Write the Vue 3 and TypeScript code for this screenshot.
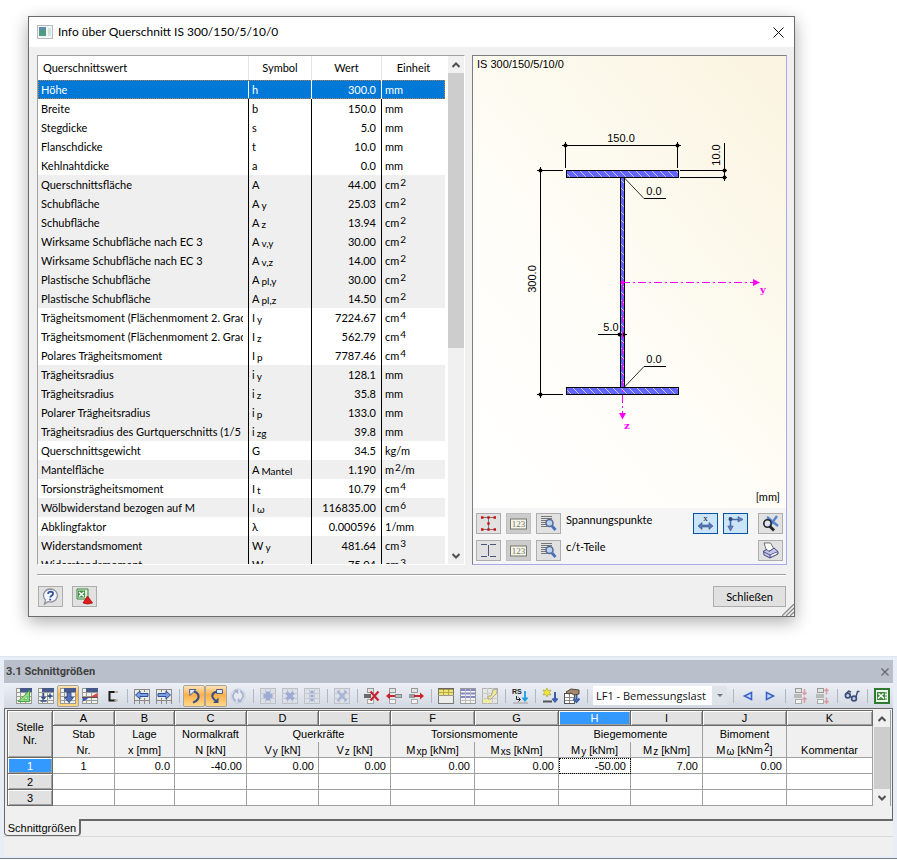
<script setup lang="ts">
import { ref } from 'vue'

interface SectionRow {
  name: string
  sym: string
  sub?: string
  value: string
  unit: string
  sup?: string
  rest?: string
  shade?: boolean
}

interface Tool {
  icon: string
  label: string
  active?: boolean
  disabled?: boolean
}

interface GridRow {
  nr: number
  cells: string[]
}

const rows: SectionRow[] = [
  { name: 'Höhe', sym: 'h', value: '300.0', unit: 'mm' },
  { name: 'Breite', sym: 'b', value: '150.0', unit: 'mm' },
  { name: 'Stegdicke', sym: 's', value: '5.0', unit: 'mm' },
  { name: 'Flanschdicke', sym: 't', value: '10.0', unit: 'mm' },
  { name: 'Kehlnahtdicke', sym: 'a', value: '0.0', unit: 'mm' },
  { name: 'Querschnittsfläche', sym: 'A', value: '44.00', unit: 'cm', sup: '2', shade: true },
  { name: 'Schubfläche', sym: 'A', sub: 'y', value: '25.03', unit: 'cm', sup: '2', shade: true },
  { name: 'Schubfläche', sym: 'A', sub: 'z', value: '13.94', unit: 'cm', sup: '2', shade: true },
  { name: 'Wirksame Schubfläche nach EC 3', sym: 'A', sub: 'v,y', value: '30.00', unit: 'cm', sup: '2', shade: true },
  { name: 'Wirksame Schubfläche nach EC 3', sym: 'A', sub: 'v,z', value: '14.00', unit: 'cm', sup: '2', shade: true },
  { name: 'Plastische Schubfläche', sym: 'A', sub: 'pl,y', value: '30.00', unit: 'cm', sup: '2', shade: true },
  { name: 'Plastische Schubfläche', sym: 'A', sub: 'pl,z', value: '14.50', unit: 'cm', sup: '2', shade: true },
  { name: 'Trägheitsmoment (Flächenmoment 2. Grad', sym: 'I', sub: 'y', value: '7224.67', unit: 'cm', sup: '4' },
  { name: 'Trägheitsmoment (Flächenmoment 2. Grad', sym: 'I', sub: 'z', value: '562.79', unit: 'cm', sup: '4' },
  { name: 'Polares Trägheitsmoment', sym: 'I', sub: 'p', value: '7787.46', unit: 'cm', sup: '4' },
  { name: 'Trägheitsradius', sym: 'i', sub: 'y', value: '128.1', unit: 'mm', shade: true },
  { name: 'Trägheitsradius', sym: 'i', sub: 'z', value: '35.8', unit: 'mm', shade: true },
  { name: 'Polarer Trägheitsradius', sym: 'i', sub: 'p', value: '133.0', unit: 'mm', shade: true },
  { name: 'Trägheitsradius des Gurtquerschnitts (1/5', sym: 'i', sub: 'zg', value: '39.8', unit: 'mm', shade: true },
  { name: 'Querschnittsgewicht', sym: 'G', value: '34.5', unit: 'kg/m' },
  { name: 'Mantelfläche', sym: 'A', sub: 'Mantel', value: '1.190', unit: 'm', sup: '2', rest: '/m', shade: true },
  { name: 'Torsionsträgheitsmoment', sym: 'I', sub: 't', value: '10.79', unit: 'cm', sup: '4' },
  { name: 'Wölbwiderstand bezogen auf M', sym: 'I', sub: 'ω', value: '116835.00', unit: 'cm', sup: '6', shade: true },
  { name: 'Abklingfaktor', sym: 'λ', value: '0.000596', unit: '1/mm' },
  { name: 'Widerstandsmoment', sym: 'W', sub: 'y', value: '481.64', unit: 'cm', sup: '3', shade: true },
  { name: 'Widerstandsmoment', sym: 'W', sub: 'z', value: '75.04', unit: 'cm', sup: '3', shade: true },
]

const selected = ref(0)
const loadCase = ref('LF1')

const letters = ['A', 'B', 'C', 'D', 'E', 'F', 'G', 'H', 'I', 'J', 'K']

const gridRows: GridRow[] = [
  { nr: 1, cells: ['1', '0.0', '-40.00', '0.00', '0.00', '0.00', '0.00', '-50.00', '7.00', '0.00', ''] },
  { nr: 2, cells: Array(11).fill('') },
  { nr: 3, cells: Array(11).fill('') },
]

/* Spreadsheet base shared by many toolbar icons */
const sheet = (head: string, line = '#9a9a94') =>
  `<rect x=".5" y=".5" width="15" height="15" fill="#f2f2ec" stroke="${line}"/>` +
  `<path d="M0 4.5H16M0 8.5H16M0 12.5H16M4.5 0V16M9.5 0V16" stroke="${line}" fill="none"/>` +
  `<rect x="4" y="0" width="12" height="4" fill="${head}"/>`

/* Document page with the ruled lower edge used by the navigation icons */
const ledger =
  '<rect x=".5" y="1.5" width="15" height="11" fill="#e9e9e6" stroke="#8a8a88"/>' +
  '<path d="M5.5 1V4M10.5 1V4M5.5 10V16M10.5 10V16M.5 12V16M15.5 12V16" stroke="#8a8a88"/>'

const faded =
  '<rect x=".5" y=".5" width="15" height="15" fill="#dcdfe6" stroke="#bdc0c8"/>' +
  '<path d="M0 5.5H16M0 10.5H16M5.5 0V16M10.5 0V16" stroke="#c6c9d1" fill="none"/>'

const miniRows =
  '<rect x="3.5" y=".5" width="6" height="4" fill="#e4e4e4" stroke="#999"/>' +
  '<rect x="3.5" y="11.5" width="6" height="4" fill="#f2f2f2" stroke="#aaa"/>'

const icons: Record<string, string> = {
  chart: sheet('#46598c') + '<path d="M2 13.5L13.5 2.5V13.5Z" fill="#8fdc85" stroke="#4aa645"/><path d="M8 11.5H11.5V8Z" fill="#e8fbe4" stroke="#4aa645" stroke-width=".6"/>',
  addRow: sheet('#46598c') + '<path d="M5.5 5V11M3.500 9L5.500 11L7.500 9M2.500 13H8.500M12 5.500V10.500M9.500 8H14.500" stroke="#2f4d92" stroke-width="1.500" fill="none"/>',
  fillDown: sheet('#46598c') + '<path d="M7 4.500H11V9.500H13.500L9 14.500L4.500 9.500H7Z" fill="#5373bd" stroke="#26407f" stroke-width=".8"/>',
  diagram: sheet('#46598c') + '<path d="M1 9V13.500L8 9Z" fill="#3a4fd0"/><path d="M15.500 5V9H8Z" fill="#e04343"/><path d="M0 9.500H16" stroke="#555"/>',
  bracket: '<path d="M12 4H5.500V12.500H12" stroke="#1d1d1d" stroke-width="2" fill="none"/><path d="M10.500 4H14M10.500 12.500H14" stroke="#bdb49a" stroke-width="2"/>',
  prev: ledger + '<path d="M1.500 7L6 3V5.500H14V8.500H6V11Z" fill="#7c9ee2" stroke="#2c4f9e"/>',
  next: ledger + '<path d="M14.500 7L10 3V5.500H2V8.500H10V11Z" fill="#7c9ee2" stroke="#2c4f9e"/>',
  undo: '<path d="M3.500 1.500H10L4 7.500Z" fill="#dfe8ff" stroke="#4d5f8c"/><path d="M8 3.500Q13 5 12.500 9.500Q11.500 13 7 14.500" stroke="#3d5180" stroke-width="2.200" fill="none"/>',
  redo: '<path d="M8.500 1.500H14.500V5.500H8.500Z" fill="#dfe8ff" stroke="#4d5f8c"/><path d="M9 3.500Q3.500 5 4.500 9Q5.500 12 9 13.500" stroke="#3d5180" stroke-width="2.200" fill="none"/><path d="M10.500 9.500V15H5Z" fill="#3d5180"/>',
  refresh: '<circle cx="8" cy="8" r="7" fill="#e6e9f1" stroke="#c6ccd9"/><path d="M6 13Q2.500 11 3 7Q4 4 7 3M10 3Q13.500 5 13 9Q12 12 9 13M4.500 2.500H7.500V5.500M11.500 13.500H8.500V10.500" stroke="#a5b1cd" stroke-width="1.700" fill="none"/>',
  plusDim: faded + '<path d="M8 3.500V12.500M3.500 8H12.500" stroke="#9cacd6" stroke-width="4"/>',
  starDim: faded + '<path d="M4.500 4.500L11.500 11.500M11.500 4.500L4.500 11.500" stroke="#9cacd6" stroke-width="3.500"/>',
  dotsDim: faded + '<path d="M6.500 4H9.500M6.500 8H9.500M6.500 12H9.500" stroke="#9cacd6" stroke-width="2.500"/>',
  crossDim: faded + '<path d="M3.500 3L12.500 13M12.500 3L3.500 13" stroke="#a4b3d8" stroke-width="2.200"/>',
  delRow: miniRows + '<rect x="0" y="6" width="7" height="4" fill="#6a6a6a"/><path d="M6.500 3.500L14.500 12.500M14.500 3.500L6.500 12.500" stroke="#c9262e" stroke-width="2.200"/>',
  rowLeft: miniRows + '<rect x="9.500" y="6.500" width="6" height="3" fill="#bbb" stroke="#888"/><path d="M0 8L4 4.500V7H9V9H4V11.500Z" fill="#c9262e"/>',
  rowRight: miniRows + '<rect x="1" y="6" width="6" height="4" fill="#999"/><path d="M16 8L12 4.500V7H6V9H12V11.500Z" fill="#c9262e"/>',
  headYellow: '<rect x=".5" y=".5" width="15" height="15" fill="#ecedea" stroke="#777"/><rect x="1" y="1" width="14" height="6" fill="#efe372"/><path d="M1 4.500H15M5.500 1V7M10.500 1V7" stroke="#b5a94c"/><path d="M0 1H16" stroke="#5a5a3c"/><path d="M0 7.500H16" stroke="#999"/>',
  rowsBlue: '<rect x=".5" y=".5" width="15" height="15" fill="#f4f4f4" stroke="#999"/><path d="M1 2H15M1 5.500H15M1 9H15" stroke="#8389c6" stroke-width="2"/><path d="M1 12.500H15M5.500 1V15M10.500 1V15" stroke="#bbb"/>',
  editNote: '<rect x=".5" y=".5" width="15" height="15" fill="#e6e6e2" stroke="#b5b5b5"/><path d="M0 5.500H16M0 10.500H16M5.500 0V16M10.500 0V16" stroke="#cacaca"/><path d="M1 11H9V15H1Z" fill="#f1eda0"/><path d="M11 2L15 1V5L9 11H6V8H9Z" fill="#efe88f" stroke="#999" stroke-width=".8"/>',
  rs: '<text x="0" y="6" font-size="7" font-weight="bold" font-family="Liberation Sans, sans-serif" fill="#222">RS</text><path d="M4.500 8V11.500H8M6.500 9.500L8.500 11.500L6.500 13.500" stroke="#222" fill="none"/><path d="M1 15H16" stroke="#999"/><path d="M13 3V12M10.500 9.500L13 12.500L15.500 9.500" stroke="#1ba0e0" stroke-width="1.800" fill="none"/>',
  newLoad: '<path d="M5 0L6 2.500L9 2L7.500 4.500L9 7L6 6.500L5 9L4 6.500L1 7L2.500 4.500L1 2L4 2.500Z" fill="#f2e83c" stroke="#b0a82c" stroke-width=".7"/><path d="M1 13.500H10" stroke="#555" stroke-width="2"/><path d="M13 4V12.500M10.500 10.500L13 13.500L15.500 10.500" stroke="#3b61a8" stroke-width="2" fill="none"/>',
  importHand: '<rect x=".5" y="5.500" width="10" height="10" fill="#fff" stroke="#555"/><path d="M1 9.500H10M1 12.500H10M5.500 6V15" stroke="#888"/><path d="M2 4L7 1L15 2V6L10 7L7 5L4 6Z" fill="#a58a72" stroke="#54453a"/><path d="M12.500 7V12M9.500 10.500L12.500 14L15.500 10.500" stroke="#3b61a8" stroke-width="2" fill="none"/>',
  left: '<path d="M11.500 4.500V11.500L4.500 8Z" fill="#cfdcff" stroke="#3a62cc" stroke-width="1.600"/>',
  right: '<path d="M4.500 4.500V11.500L11.500 8Z" fill="#cfdcff" stroke="#3a62cc" stroke-width="1.600"/>',
  moveUp: miniRows + '<rect x="2" y="6" width="8" height="4" fill="#b9b9b9"/><path d="M12.500 1V6.500M10.500 4.500L12.500 6.500L14.500 4.500M12.500 15V9.500M10.500 11.500L12.500 9.500L14.500 11.500" stroke="#dc9a9e" stroke-width="1.500" fill="none"/>',
  moveDown: miniRows + '<rect x="2" y="6" width="8" height="4" fill="#b9b9b9"/><path d="M12.500 6.500V1M10.500 3L12.500 1L14.500 3M12.500 9.500V15M10.500 13L12.500 15L14.500 13" stroke="#dc9a9e" stroke-width="1.500" fill="none"/>',
  glasses: '<circle cx="3.800" cy="7.500" r="2.400" fill="#c7d4ef" stroke="#3d4f78" stroke-width="1.700"/><circle cx="10" cy="10.500" r="2.400" fill="#c7d4ef" stroke="#3d4f78" stroke-width="1.700"/><path d="M6 8.500L7.800 9.500M2 6L4.500 3L7 4M12 9L13.500 3.500H15.500" stroke="#3d4f78" stroke-width="1.400" fill="none"/>',
  excel: '<rect x="1" y="1" width="14" height="14" fill="#eef5ea" stroke="#2f7a32" stroke-width="2"/><path d="M11 5H13M11 8H13M11 11H13" stroke="#3c8a3e"/><rect x="3" y="4" width="8" height="8" fill="#3c8a3e"/><path d="M4.500 5.500L10 10.500M9.500 5.500L4 10.500" stroke="#fff" stroke-width="1.500"/>',
}

const tools: Tool[][] = [
  [
    { icon: 'chart', label: 'Diagramm' },
    { icon: 'addRow', label: 'Zeile hinzufügen' },
    { icon: 'fillDown', label: 'Nach unten füllen', active: true },
    { icon: 'diagram', label: 'Verlauf' },
    { icon: 'bracket', label: 'Querschnitt' },
  ],
  [
    { icon: 'prev', label: 'Vorherige Tabelle' },
    { icon: 'next', label: 'Nächste Tabelle' },
  ],
  [
    { icon: 'undo', label: 'Auswahl übernehmen', active: true },
    { icon: 'redo', label: 'Auswahl zurück', active: true },
    { icon: 'refresh', label: 'Aktualisieren', disabled: true },
  ],
  [
    { icon: 'plusDim', label: 'Einfügen', disabled: true },
    { icon: 'starDim', label: 'Multiplizieren', disabled: true },
    { icon: 'dotsDim', label: 'Teilen', disabled: true },
  ],
  [{ icon: 'crossDim', label: 'Leeren', disabled: true }],
  [
    { icon: 'delRow', label: 'Zeile löschen' },
    { icon: 'rowLeft', label: 'Zeile einfügen' },
    { icon: 'rowRight', label: 'Zeile entfernen' },
  ],
  [
    { icon: 'headYellow', label: 'Kopfzeile' },
    { icon: 'rowsBlue', label: 'Zeilen' },
    { icon: 'editNote', label: 'Bearbeiten' },
  ],
  [{ icon: 'rs', label: 'RS Import' }],
  [
    { icon: 'newLoad', label: 'Neuer Lastfall' },
    { icon: 'importHand', label: 'Übernehmen' },
  ],
]

const toolsAfter: Tool[][] = [
  [
    { icon: 'left', label: 'Vorheriger Lastfall' },
    { icon: 'right', label: 'Nächster Lastfall' },
  ],
  [
    { icon: 'moveUp', label: 'Zusammenführen', disabled: true },
    { icon: 'moveDown', label: 'Trennen', disabled: true },
  ],
  [{ icon: 'glasses', label: 'Ansicht' }],
  [{ icon: 'excel', label: 'Excel' }],
]

const dots: [number, number][] = [
  [92, 89], [204, 89], [67, 114], [67, 338], [251, 114], [251, 121], [146, 278], [150, 278],
]
</script>

<template>
  <main class="page">
    <section class="dialog" aria-labelledby="dlg-title">
      <header class="dialog-head">
        <svg class="app-icon" viewBox="0 0 16 14" width="16" height="14" aria-hidden="true">
          <rect x=".5" y=".5" width="15" height="13" fill="#f3f5f7" stroke="#b4bac0" />
          <rect x="2" y="2" width="7" height="9" fill="#5f8fb0" />
          <path d="M2 11V6L9 4V11Z" fill="#4f9a80" />
          <rect x="11" y="3" width="3" height="8" fill="#d4e4dc" />
        </svg>
        <h1 id="dlg-title">Info über Querschnitt IS 300/150/5/10/0</h1>
        <button class="close" type="button" aria-label="Dialog schließen">
          <svg viewBox="0 0 11 11" width="11" height="11"><path d="M.5 .5L10.500 10.500M10.500 .5L.5 10.500" stroke="#111" fill="none" /></svg>
        </button>
      </header>

      <div class="dialog-body">
        <div class="values">
          <div class="values-view">
            <table class="values-table">
              <colgroup>
                <col class="c-name" /><col class="c-sym" /><col class="c-val" /><col class="c-unit" />
              </colgroup>
              <thead>
                <tr>
                  <th scope="col" class="first">Querschnittswert</th>
                  <th scope="col">Symbol</th>
                  <th scope="col">Wert</th>
                  <th scope="col">Einheit</th>
                </tr>
              </thead>
              <tbody>
                <tr
                  v-for="(r, i) in rows"
                  :key="i"
                  :class="{ shade: r.shade, selected: i === selected }"
                  @click="selected = i"
                >
                  <td><div class="clip">{{ r.name }}</div></td>
                  <td>{{ r.sym }}<sub v-if="r.sub">{{ r.sub }}</sub></td>
                  <td class="num">{{ r.value }}</td>
                  <td>{{ r.unit }}<sup v-if="r.sup">{{ r.sup }}</sup>{{ r.rest }}</td>
                </tr>
              </tbody>
            </table>
          </div>
          <div class="scroll">
            <button type="button" aria-label="Nach oben">
              <svg viewBox="0 0 8 6" width="8" height="6"><path d="M.5 5L4 1.500L7.500 5" /></svg>
            </button>
            <div class="track"><div class="thumb"></div></div>
            <button type="button" aria-label="Nach unten">
              <svg viewBox="0 0 8 6" width="8" height="6"><path d="M.5 1L4 4.500L7.500 1" /></svg>
            </button>
          </div>
        </div>

        <div class="preview">
          <div class="canvas">
            <svg class="drawing" viewBox="0 0 313 452" role="img" aria-label="Querschnitt IS 300/150/5/10/0">
              <defs>
                <pattern id="hatch" width="8" height="8" patternUnits="userSpaceOnUse">
                  <rect width="8" height="8" fill="#6464ff" />
                  <path d="M-1 -1L9 9M-1 7L1 9M7 -1L9 1" stroke="#c4c4ff" />
                </pattern>
              </defs>
              <text x="4" y="12">IS 300/150/5/10/0</text>
              <text x="307" y="445" text-anchor="end" class="tahoma">[mm]</text>

              <g class="steel">
                <rect x="147.500" y="121.500" width="4" height="210" />
                <rect x="93.500" y="114.500" width="112" height="7" />
                <rect x="93.500" y="331.500" width="112" height="7" />
              </g>

              <g class="dim">
                <path d="M89 89.500H208M92.500 86V112M204.500 86V112" />
                <path d="M67.500 111V342M64 114.500H90M64 338.500H90" />
                <path d="M207 114.500H254M207 121.500H254M251.500 87V125" />
                <path d="M171 142.500H193M171 310.500H193M125 278.500H154" />
              </g>
              <path d="M151.500 122L171 142.500M151.500 331L171 310.500" stroke="#333" fill="none" />
              <circle v-for="(d, i) in dots" :key="i" :cx="d[0] + 0.5" :cy="d[1] + 0.5" r="2" />

              <text x="148" y="86" text-anchor="middle">150.0</text>
              <text x="181" y="139" text-anchor="middle">0.0</text>
              <text x="181" y="307" text-anchor="middle">0.0</text>
              <text x="138" y="275" text-anchor="middle">5.0</text>
              <text transform="translate(63 223) rotate(-90)" text-anchor="middle">300.0</text>
              <text transform="translate(247 99) rotate(-90)" text-anchor="middle">10.0</text>

              <g class="axis">
                <path d="M149 226.500H281" />
                <path d="M149.500 227V357" />
              </g>
              <g fill="#ff00ff">
                <circle cx="149.500" cy="226.500" r="2" />
                <path d="M280 223V230L287 226.500Z" />
                <path d="M146 357H153L149.500 363.500Z" />
                <text class="axis-name" x="287" y="237">y</text>
                <text class="axis-name" x="151" y="373">z</text>
              </g>
            </svg>
          </div>

          <div class="options">
            <button type="button" class="tile" aria-label="Spannungspunkte anzeigen">
              <svg viewBox="0 0 17 17" width="17" height="17">
                <path d="M2 2.500H15M2 14.500H15M8.500 3V14" stroke="#777" fill="none" />
                <path d="M1 2.500H3.500M7.300 2.500H9.700M13.500 2.500H16M1 14.500H3.500M7.300 14.500H9.700M13.500 14.500H16M7.300 8.500H9.700" stroke="#d01010" stroke-width="2.400" />
              </svg>
            </button>
            <button type="button" class="tile off" aria-label="Nummerierung Spannungspunkte" disabled>
              <svg viewBox="0 0 17 12" width="17" height="12">
                <rect x=".5" y="1" width="16" height="10" fill="#f4f4e8" stroke="#77776c" />
                <text class="tiny" x="8.500" y="9" text-anchor="middle">123</text>
              </svg>
            </button>
            <button type="button" class="tile" aria-label="Spannungspunkte Details">
              <svg viewBox="0 0 17 17" width="17" height="17">
                <path d="M1 1.500H12M1 3.500H12M1 5.500H9M1 7.500H6M1 9.500H6M1 11.500H7" stroke="#777" />
                <circle cx="9.500" cy="8" r="3.500" fill="#bcd2f4" stroke="#54698f" stroke-width="1.500" />
                <path d="M12 11L15.500 15" stroke="#4c6fbd" stroke-width="2.800" />
              </svg>
            </button>
            <span class="opt-label">Spannungspunkte</span>
            <button type="button" class="tile on" aria-label="Bemaßung">
              <svg viewBox="0 0 17 17" width="17" height="17">
                <text class="tiny x" x="8.500" y="6" text-anchor="middle">x</text>
                <path d="M1 11L5 7.500V10H12V7.500L16 11L12 14.500V12H5V14.500Z" fill="#5577b5" stroke="#3a5487" stroke-width=".6" />
              </svg>
            </button>
            <button type="button" class="tile on" aria-label="Achsen">
              <svg viewBox="0 0 17 17" width="17" height="17">
                <path d="M3.500 12V4.500H12" stroke="#4b6ba5" stroke-width="1.600" fill="none" />
                <circle cx="3.500" cy="4" r="2" fill="#2e4679" />
                <path d="M11 1.500L16 4.500L11 7ZM.8 11H6.200L3.500 16Z" fill="#5f80bd" stroke="#3a5487" stroke-width=".6" />
              </svg>
            </button>
            <button type="button" class="tile end" aria-label="Zoom zurücksetzen">
              <svg viewBox="0 0 17 17" width="17" height="17">
                <path d="M5 2L16 11M15 1L7 12" stroke="#5a83cf" stroke-width="2.400" />
                <circle cx="5.500" cy="8.500" r="3.700" fill="#dde6f4" fill-opacity=".6" stroke="#222" stroke-width="1.600" />
                <path d="M8 11.500L12 15.500" stroke="#222" stroke-width="2.800" />
              </svg>
            </button>

            <button type="button" class="tile" aria-label="c/t-Teile anzeigen">
              <svg viewBox="0 0 17 17" width="17" height="17">
                <path d="M1 2.500H7M10 2.500H16M1 14.500H7M10 14.500H16M8.500 3V14" stroke="#4a5478" fill="none" />
              </svg>
            </button>
            <button type="button" class="tile off" aria-label="Nummerierung c/t-Teile" disabled>
              <svg viewBox="0 0 17 12" width="17" height="12">
                <rect x=".5" y="1" width="16" height="10" fill="#f4f4e8" stroke="#77776c" />
                <text class="tiny" x="8.500" y="9" text-anchor="middle">123</text>
              </svg>
            </button>
            <button type="button" class="tile" aria-label="c/t-Teile Details">
              <svg viewBox="0 0 17 17" width="17" height="17">
                <path d="M1 1.500H12M1 3.500H12M1 5.500H9M1 7.500H6M1 9.500H6M1 11.500H7" stroke="#777" />
                <circle cx="9.500" cy="8" r="3.500" fill="#bcd2f4" stroke="#54698f" stroke-width="1.500" />
                <path d="M12 11L15.500 15" stroke="#4c6fbd" stroke-width="2.800" />
              </svg>
            </button>
            <span class="opt-label">c/t-Teile</span>
            <button type="button" class="tile end" aria-label="Drucken">
              <svg viewBox="0 0 17 17" width="17" height="17">
                <path d="M2 1H8.500L12 7L5 10Z" fill="#fff" stroke="#555" stroke-width=".8" />
                <path d="M1.500 9L5 7.500L7 9.500L12 6L16 9.500V12L8 16L2 13Z" fill="#c3c3ea" stroke="#3d3d74" stroke-width=".9" />
                <path d="M2 10L8 13L16 9.500M8 13V16" stroke="#3d3d74" stroke-width=".8" fill="none" />
                <path d="M9.500 13.500L14.500 11.200" stroke="#fff" stroke-width="1.200" />
              </svg>
            </button>
          </div>
        </div>
      </div>

      <footer class="dialog-foot">
        <button type="button" class="tile" aria-label="Hilfe">
          <svg viewBox="0 0 17 17" width="17" height="17">
            <path d="M8.500 1A7 6.500 0 1 1 6 13.600L2.500 16L3.500 12A7 6.500 0 0 1 8.500 1Z" fill="#f4f6fb" stroke="#8e929b" stroke-width="1.300" />
            <path d="M6 5.800Q6.300 3.600 8.700 3.600Q11.200 3.800 11 5.800Q10.800 7.300 9.200 8Q8.400 8.600 8.400 9.600M8.200 10.800V12.500" stroke="#31549e" stroke-width="1.900" fill="none" />
          </svg>
        </button>
        <button type="button" class="tile" aria-label="Excel-Export">
          <svg viewBox="0 0 17 17" width="17" height="17">
            <path d="M1 1H12V11H1Z" fill="#dcebd4" stroke="#3b8440" />
            <rect x="2" y="2.500" width="7" height="7" fill="#3f8f46" />
            <path d="M3 4L8 8.500M8 4L3 8.500" stroke="#fff" stroke-width="1.400" />
            <path d="M11.500 8L16.500 15L11.500 16L7 15Z" fill="#e01c1c" stroke="#9c0f0f" stroke-width=".8" />
          </svg>
        </button>
        <button type="button" class="push">Schließen</button>
        <svg class="grip" viewBox="0 0 12 12" width="12" height="12" aria-hidden="true">
          <path d="M0 12L12 0M4 12L12 4M8 12L12 8" stroke="#8a8a8a" stroke-width="1.300" />
        </svg>
      </footer>
    </section>

    <section class="panel" aria-labelledby="panel-title">
      <header class="panel-head">
        <h2 id="panel-title">3.1 Schnittgrößen</h2>
        <button class="close" type="button" aria-label="Fenster schließen">
          <svg viewBox="0 0 8 8" width="8" height="8"><path d="M.5 .5L7.500 7.500M7.500 .5L.5 7.500" stroke="#666" stroke-width="1.200" fill="none" /></svg>
        </button>
      </header>

      <div class="toolbar" role="toolbar">
        <template v-for="(g, gi) in tools" :key="gi">
          <button
            v-for="t in g"
            :key="t.icon"
            type="button"
            class="tool"
            :class="{ active: t.active }"
            :disabled="t.disabled"
            :aria-label="t.label"
          >
            <svg viewBox="0 0 16 16" width="16" height="16" v-html="icons[t.icon]"></svg>
          </button>
          <span class="sep"></span>
        </template>
        <label class="combo">
          <select v-model="loadCase" aria-label="Lastfall">
            <option value="LF1">LF1 - Bemessungslast</option>
          </select>
          <span class="arrow"></span>
        </label>
        <template v-for="(g, gi) in toolsAfter" :key="gi">
          <span class="sep"></span>
          <button
            v-for="t in g"
            :key="t.icon"
            type="button"
            class="tool"
            :disabled="t.disabled"
            :aria-label="t.label"
          >
            <svg viewBox="0 0 16 16" width="16" height="16" v-html="icons[t.icon]"></svg>
          </button>
        </template>
      </div>

      <div class="client">
        <table class="sheet">
          <colgroup>
            <col class="w46" /><col class="w62" /><col class="w60" /><col class="w72" /><col class="w72" /><col class="w72" />
            <col class="w84" /><col class="w84" /><col class="w72" /><col class="w72" /><col class="w84" /><col />
          </colgroup>
          <thead>
            <tr class="letters">
              <th rowspan="3" scope="col" class="corner">Stelle<br />Nr.</th>
              <th v-for="l in letters" :key="l" scope="col" :class="{ hot: l === 'H' }">{{ l }}</th>
            </tr>
            <tr class="groups">
              <th>Stab</th>
              <th>Lage</th>
              <th>Normalkraft</th>
              <th colspan="2">Querkräfte</th>
              <th colspan="2">Torsionsmomente</th>
              <th colspan="2">Biegemomente</th>
              <th>Bimoment</th>
              <th></th>
            </tr>
            <tr class="units">
              <th>Nr.</th>
              <th>x [mm]</th>
              <th>N [kN]</th>
              <th>V<sub>y</sub> [kN]</th>
              <th>V<sub>z</sub> [kN]</th>
              <th>M<sub>xp</sub> [kNm]</th>
              <th>M<sub>xs</sub> [kNm]</th>
              <th>M<sub>y</sub> [kNm]</th>
              <th>M<sub>z</sub> [kNm]</th>
              <th>M<sub>ω</sub> [kNm<sup>2</sup>]</th>
              <th>Kommentar</th>
            </tr>
          </thead>
          <tbody>
            <tr v-for="r in gridRows" :key="r.nr">
              <th scope="row" :class="{ hot: r.nr === 1 }">{{ r.nr }}</th>
              <td v-for="(c, ci) in r.cells" :key="ci" :class="{ mid: ci === 0, focus: r.nr === 1 && ci === 7 }">{{ c }}</td>
            </tr>
          </tbody>
        </table>
        <div class="scroll">
          <button type="button" aria-label="Nach oben">
            <svg viewBox="0 0 8 6" width="8" height="6"><path d="M.5 5L4 1.500L7.500 5" /></svg>
          </button>
          <div class="track"><div class="thumb"></div></div>
          <button type="button" aria-label="Nach unten">
            <svg viewBox="0 0 8 6" width="8" height="6"><path d="M.5 1L4 4.500L7.500 1" /></svg>
          </button>
        </div>
      </div>

      <div class="tabs">
        <button type="button" class="tab">Schnittgrößen</button>
        <span class="rail"></span>
      </div>
      <div class="status"></div>
    </section>
  </main>
</template>

<style>
body {
  margin: 0;
  background: #fff;
}
</style>

<style scoped>
.page {
  font-family: Lato, "Open Sans", sans-serif;
  font-size: 11px;
  line-height: 16px;
  color: #000;
}

button {
  font: inherit;
  color: inherit;
  padding: 0;
  border: 0;
  background: none;
}

h1,
h2 {
  margin: 0;
  flex: 1;
}

sub,
sup {
  font-size: 10px;
  line-height: 0;
  margin-left: 1px;
  vertical-align: baseline;
  position: relative;
}

sub {
  top: 1px;
}

sup {
  top: -3px;
}

/* Dialog */
.dialog {
  margin: 16px 102px 0 28px;
  border: 1px solid #6b6b6b;
  background: #f0f0f0;
  box-shadow: 0 5px 16px rgba(0, 0, 0, 0.32);
}

.dialog-head {
  display: flex;
  align-items: center;
  height: 30px;
  padding: 0 10px 0 8px;
  gap: 5px;
  background: #fff;
}

.dialog-head h1 {
  font: 12px/16px Lato, "Open Sans", sans-serif;
}

.close {
  display: flex;
}

.dialog-body {
  display: grid;
  grid-template-columns: minmax(0, 428fr) minmax(0, 315fr);
  gap: 7px;
  padding: 8px 7px 9px 8px;
}

.values {
  display: flex;
  height: 508px;
  background: #fff;
  border: 1px solid #fff;
  border-top-color: #a0a0a0;
  border-left-color: #a0a0a0;
}

.values-view {
  flex: 1;
  min-width: 0;
  overflow: hidden;
  padding-right: 3px;
}

.values-table,
.sheet {
  width: 100%;
  table-layout: fixed;
  border-collapse: separate;
  border-spacing: 0;
}

.values-table sub {
  margin-left: 2px;
}

.c-name {
  width: 211px;
}

.c-sym,
.c-unit {
  width: 63px;
}

.c-val {
  width: 70px;
}

.values-table th {
  height: 24px;
  padding: 0;
  font-weight: normal;
  border-right: 1px solid #e5e5e5;
  box-sizing: border-box;
}

.values-table th.first {
  text-align: left;
  padding-left: 5px;
}

.values-table td {
  height: 19px;
  box-sizing: border-box;
  padding: 1px 5px 0 3px;
  border-right: 1px solid #000;
  white-space: nowrap;
}

.values-table th:last-child,
.values-table td:last-child {
  border-right: 0;
}

.values-table .num {
  text-align: right;
}

.clip {
  overflow: hidden;
}

.shade td {
  background: #efefef;
}

.selected td {
  background: #0078d7;
  color: #fff;
  border-right-color: #fff;
}

.selected {
  outline: 1px dotted #b08050;
  outline-offset: -1px;
}

.scroll {
  display: flex;
  flex-direction: column;
  width: 16px;
  background: #f0f0f0;
}

.scroll button {
  display: grid;
  place-items: center;
  height: 17px;
}

.scroll path {
  fill: none;
  stroke: #505050;
  stroke-width: 2;
}

.track {
  flex: 1;
}

.thumb {
  height: 58%;
  background: #cdcdcd;
}

.preview {
  display: flex;
  flex-direction: column;
  border: 1px solid #a9a9ec;
  border-top-color: #7f7f7f;
  border-left-color: #7f7f7f;
  background: #f5f5f5;
}

.canvas {
  flex: 1;
  background: linear-gradient(50deg, #fff 0%, #fffdf8 40%, #fcf8ea 72%, #faf3e0 100%);
}

.drawing {
  display: block;
  width: 100%;
}

.drawing text {
  font: 11px "Liberation Sans", Arial, sans-serif;
}

.drawing .tahoma {
  font-family: Lato, "Open Sans", sans-serif;
}

.drawing .axis-name {
  font: bold 10px "DejaVu Serif", serif;
}

.steel rect {
  fill: url(#hatch);
  stroke: #000;
}

.dim path {
  fill: none;
  stroke: #000;
  shape-rendering: crispEdges;
}

.axis path {
  fill: none;
  stroke: #f0f;
  stroke-dasharray: 8 3 2 3;
  shape-rendering: crispEdges;
}

.options {
  display: grid;
  grid-template-columns: 25px 25px 25px 1fr 25px 25px 30px;
  gap: 6px 5px;
  padding: 5px 3px 3px;
}

.tile {
  display: grid;
  place-items: center;
  box-sizing: border-box;
  width: 25px;
  height: 21px;
  background: #e1e1e1;
  border: 1px solid #adadad;
}

.tile.off {
  background: #ccc;
  border-color: #bfbfbf;
}

.tile.on {
  background: #cce4f7;
  border-color: #0054a0;
}

.tile.end {
  grid-column: 7;
  justify-self: end;
}

.tiny {
  fill: #77776a;
}

.tile text {
  font: 9px "Liberation Serif", serif;
}

.tile .x {
  fill: #111;
}

.opt-label {
  line-height: 14px;
}

.dialog-foot {
  position: relative;
  display: flex;
  gap: 9px;
  margin: 0 8px;
  padding: 11px 0 9px 1px;
  border-top: 1px solid #a0a0a0;
  box-shadow: inset 0 1px #fff;
}

.push {
  margin-left: auto;
  width: 73px;
  height: 21px;
  background: #e1e1e1;
  border: 1px solid #adadad;
  box-sizing: border-box;
}

.grip {
  position: absolute;
  right: -8px;
  bottom: 0;
}

/* Table window */
.panel {
  margin-top: 39px;
  padding: 3px 4px 2px;
  background: #e8edf6;
  border-top: 1px solid #dfe5ee;
  border-bottom: 1px solid #777d88;
}

.panel-head {
  display: flex;
  align-items: center;
  height: 23px;
  padding: 0 4px 0 2px;
  background: #b9c0cb;
}

.panel-head h2 {
  font: bold 11px/16px Roboto, "Open Sans", sans-serif;
  color: #414141;
}

.toolbar {
  display: flex;
  align-items: center;
  height: 25px;
  padding-left: 9px;
  background: linear-gradient(#edf0f6, #d3d8e2);
}

.tool {
  display: grid;
  place-items: center;
  flex: none;
  box-sizing: border-box;
  width: 22px;
  height: 22px;
}

.tool.active {
  border: 1px solid #a9a59a;
  border-radius: 2px;
  background: linear-gradient(#fde3b5, #fbb04c 45%, #fdd98c);
}

.sep {
  flex: none;
  width: 1px;
  height: 14px;
  margin: 0 3px 0 4px;
  background: #b3b7c0;
}

.combo {
  display: flex;
  flex: none;
  width: 134px;
  height: 19px;
  margin: 0 2px;
  background: #fff;
}

.combo select {
  flex: 1;
  min-width: 0;
  appearance: none;
  border: 0;
  padding: 0 0 0 3px;
  background: none;
  color: #111;
  font: 11px/19px "Open Sans", "Noto Sans", sans-serif;
}

.arrow {
  width: 15px;
  display: grid;
  place-items: center;
  background: #dfe3ea;
}

.arrow::after {
  content: "";
  border: 3px solid transparent;
  border-top-color: #777;
  border-bottom: 0;
}

.client {
  display: flex;
  align-items: stretch;
  gap: 1px;
  padding: 1px 1px 13px 2px;
  background: #f0f0f0;
  border: 1px solid #696969;
  border-bottom: 0;
}

.sheet {
  flex: 1;
  min-width: 0;
  font: 11px/14px "Liberation Sans", Arial, sans-serif;
}

.client .scroll {
  border-right: 1px solid #a0a0a0;
}

.client .thumb {
  height: 100%;
}

.w46 { width: 46px; }
.w60 { width: 60px; }
.w62 { width: 62px; }
.w72 { width: 72px; }
.w84 { width: 84px; }

.sheet th,
.sheet td {
  box-sizing: border-box;
  height: 16px;
  padding: 0;
  font-weight: normal;
  white-space: nowrap;
  border-right: 1px solid #a0a0a0;
}

.sheet td,
.sheet .units th {
  border-bottom: 1px solid #a0a0a0;
}

.sheet td {
  background: #fff;
  text-align: right;
  padding-right: 4px;
}

.sheet td.mid {
  text-align: center;
  padding: 0;
}

.sheet td.focus {
  outline: 1px dotted #000;
  outline-offset: -1px;
}

.sheet .letters th,
.sheet tbody th {
  background: #e1e1e1;
  border-right: 1px solid #696969;
  border-bottom: 1px solid #696969;
  box-shadow: inset 1px 1px #fff, inset -1px -1px #a0a0a0;
}

.sheet .letters th {
  border-top: 1px solid #696969;
}

.sheet .letters .corner {
  line-height: 13px;
}

.sheet .corner,
.sheet tbody th {
  border-left: 1px solid #696969;
}

.sheet .letters .hot,
.sheet tbody .hot {
  background: #3399ff;
  color: #fff;
}

.tabs {
  display: flex;
  height: 17px;
  background: #f0f0f0;
  border-bottom: 1px solid #d9d9d9;
}

.tab {
  width: 77px;
  height: 17px;
  border: 1px solid #696969;
  border-right-width: 2px;
  border-top: 0;
  border-radius: 0 0 4px 4px;
  font: 11px/18px "Liberation Sans", Arial, sans-serif;
}

.rail {
  flex: 1;
  height: 16px;
  border-top: 2px solid #696969;
  box-sizing: border-box;
}

.status {
  height: 19px;
  background: #f0f0f0;
}
</style>
